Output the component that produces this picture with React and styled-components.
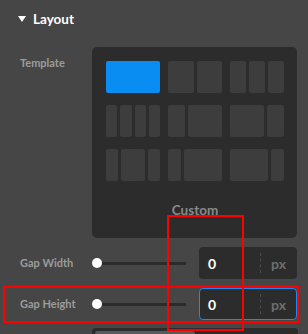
import React from 'react';
import styled, { createGlobalStyle } from 'styled-components';

const Global = createGlobalStyle`
    body {
        margin: 0;
        background: #464646;
        font-family: Lato, "Open Sans", sans-serif;
        overflow: hidden;
    }
`;

const Page = styled.div`
    position: relative;
    width: 308px;
    height: 334px;
    background: #464646;
    overflow: hidden;
`;

const Header = styled.div`
    display: flex;
    align-items: center;
    gap: 7px;
    height: 38px;
    padding-left: 18px;
    color: #fff;
    font-size: 13.5px;
    font-weight: 700;
`;

const Caret = styled.span`
    width: 0;
    height: 0;
    border-left: 4px solid transparent;
    border-right: 4px solid transparent;
    border-top: 6px solid #fff;
`;

const Section = styled.div`
    display: flex;
    flex-direction: column;
    gap: 9px;
    padding: 9px 11px 0 20px;
`;

const Row = styled.div`
    display: flex;
    align-items: ${({ top }) => (top ? 'flex-start' : 'center')};
`;

const Label = styled.div`
    width: 72px;
    flex: none;
    color: #9c9c9c;
    font-size: 11px;
    font-weight: 700;
    line-height: 12px;
    padding-top: ${({ top }) => (top ? '10px' : '0')};
`;

const Panel = styled.div`
    width: 205px;
    height: 191px;
    box-sizing: border-box;
    background: #2c2c2c;
    border-radius: 5px;
    padding: 14px 13px 0 14px;
    display: flex;
    flex-direction: column;
    align-items: center;
`;

const Grid = styled.div`
    display: grid;
    grid-template-columns: repeat(3, 54px);
    column-gap: 8px;
    row-gap: 12px;
`;

const Option = styled.div`
    display: flex;
    gap: 3px;
    height: 32px;
`;

const Cell = styled.div`
    flex: ${({ size }) => size};
    border-radius: 2px;
    background: ${({ active }) => (active ? '#0a8df2' : '#3d3d3d')};
`;

const Custom = styled.div`
    margin-top: 22px;
    color: #8a8a8a;
    font-size: 13.5px;
    font-weight: 700;
    line-height: 14px;
`;

const Slider = styled.div`
    position: relative;
    width: 94px;
    height: 12px;
    margin-right: 13px;
    display: flex;
    align-items: center;
`;

const Track = styled.div`
    width: 100%;
    height: 3px;
    background: #2b2b2b;
`;

const Thumb = styled.div`
    position: absolute;
    left: 0;
    top: 1px;
    width: 10px;
    height: 10px;
    border-radius: 50%;
    background: #fff;
`;

const Input = styled.div`
    width: 98px;
    height: 32px;
    box-sizing: border-box;
    background: #2c2c2c;
    border-radius: 4px;
    border: 1px solid ${({ focused }) => (focused ? '#1a8cf0' : 'transparent')};
    display: flex;
    align-items: center;
`;

const Value = styled.div`
    flex: 1;
    padding-left: 8px;
    color: #fff;
    font-size: 14px;
    font-weight: 700;
`;

const Unit = styled.div`
    width: 35px;
    height: 20px;
    border-left: 1px dashed #4c4c4c;
    display: flex;
    align-items: center;
    justify-content: center;
    color: #6e6e6e;
    font-size: 14px;
    font-weight: 700;
`;

const Tabs = styled.div`
    margin: 8px 10px 0 92px;
    height: 30px;
    background: #2c2c2c;
    border-radius: 4px;
    padding: 3px;
    display: flex;
`;

const Tab = styled.div`
    flex: 1;
    border-radius: 3px;
    background: ${({ active }) => (active ? '#5a5a5a' : 'transparent')};
`;

const Mark = styled.div`
    position: absolute;
    box-sizing: border-box;
    border: 2px solid #f00;
    left: ${({ x }) => x}px;
    top: ${({ y }) => y}px;
    width: ${({ w }) => w}px;
    height: ${({ h }) => h}px;
`;

const templates = [
    [1], [1, 1], [1, 1, 1],
    [1, 1, 1, 1], [1, 2], [2, 1],
    [1, 2, 1], [1, 3], [3, 1],
];

const GapRow = ({ label, focused }) => (
    <Row>
        <Label>{label}</Label>
        <Slider>
            <Track />
            <Thumb />
        </Slider>
        <Input focused={focused}>
            <Value>0</Value>
            <Unit>px</Unit>
        </Input>
    </Row>
);

const App = () => (
    <Page>
        <Global />
        <Header>
            <Caret />
            Layout
        </Header>
        <Section>
            <Row top>
                <Label top>Template</Label>
                <Panel>
                    <Grid>
                        {templates.map((t, i) => (
                            <Option key={i}>
                                {t.map((s, j) => <Cell key={j} size={s} active={i === 0} />)}
                            </Option>
                        ))}
                    </Grid>
                    <Custom>Custom</Custom>
                </Panel>
            </Row>
            <GapRow label="Gap Width" />
            <GapRow label="Gap Height" focused />
        </Section>
        <Tabs>
            <Tab active />
            <Tab />
        </Tabs>
        <Mark x={3} y={286} w={296} h={37} />
        <Mark x={167} y={215} w={77} h={116} />
    </Page>
);

export default App;
